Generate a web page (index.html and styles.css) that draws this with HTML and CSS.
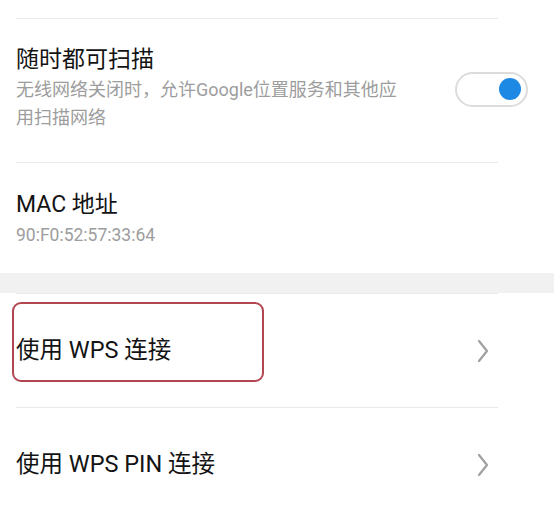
FILE: index.html
```html
<!DOCTYPE html>
<html lang="zh-CN">
<head>
<meta charset="utf-8">
<title>WLAN 高级设置</title>
<link rel="stylesheet" href="styles.css">
</head>
<body>
<div class="screen">
  <div class="top-space"></div>
  <div class="divider"></div>

  <div class="row row-toggle">
    <div class="text">
      <div class="title">随时都可扫描</div>
      <div class="sub">无线网络关闭时，允许Google位置服务和其他应用扫描网络</div>
    </div>
    <div class="switch" role="switch" aria-checked="true"><span class="knob"></span></div>
  </div>
  <div class="divider"></div>

  <div class="row row-info">
    <div class="text">
      <div class="title">MAC 地址</div>
      <div class="sub value">90:F0:52:57:33:64</div>
    </div>
  </div>

  <div class="band"></div>
  <div class="divider"></div>

  <div class="row row-link highlighted">
    <div class="title">使用 WPS 连接</div>
    <svg class="chev" width="12" height="24" viewBox="0 0 12 24"><path d="M2 2 L10 12 L2 22" fill="none" stroke="#a0a0a0" stroke-width="2.2" stroke-linecap="round" stroke-linejoin="round"/></svg>
    <span class="mark"></span>
  </div>
  <div class="divider"></div>

  <div class="row row-link">
    <div class="title">使用 WPS PIN 连接</div>
    <svg class="chev" width="12" height="24" viewBox="0 0 12 24"><path d="M2 2 L10 12 L2 22" fill="none" stroke="#a0a0a0" stroke-width="2.2" stroke-linecap="round" stroke-linejoin="round"/></svg>
  </div>
</div>
</body>
</html>
```

FILE: styles.css
```css
html, body {
  margin: 0;
  padding: 0;
  background: #ffffff;
}

body {
  font-family: Roboto, "Noto Sans CJK SC", "Noto Sans", sans-serif;
  color: #141414;
  width: 554px;
  height: 519px;
  overflow: hidden;
}

.screen {
  display: flex;
  flex-direction: column;
}

.top-space {
  height: 18px;
}

.divider {
  height: 1px;
  margin: 0 56px 0 16px;
  background: #e9e9e9;
}

.row {
  display: flex;
  align-items: center;
  padding-left: 16px;
}

.title {
  font-size: 23px;
  line-height: 32px;
  color: #131313;
  white-space: nowrap;
}

.sub {
  font-size: 18px;
  line-height: 28px;
  color: #9d9d9d;
}

.row-toggle {
  padding: 25px 26px 30px 16px;
  justify-content: space-between;
}

.row-toggle .text {
  width: 396px;
}

.switch {
  width: 64px;
  height: 31px;
  border: 2px solid #dcdcdc;
  border-radius: 18px;
  display: flex;
  align-items: center;
  justify-content: flex-end;
  padding-right: 5px;
  box-sizing: content-box;
  flex: none;
  margin-top: 2px;
}

.knob {
  width: 22px;
  height: 22px;
  border-radius: 50%;
  background: #1e88e5;
}

.row-info {
  padding: 26px 16px 24px 16px;
}

.value {
  font-size: 17.5px;
}

.band {
  height: 20px;
  background: #f1f1f1;
}

.row-link {
  height: 113px;
  justify-content: space-between;
  padding-right: 65px;
  position: relative;
}

.row-link .title {
  font-size: 23.5px;
  margin-top: -2px;
}

.chev {
  flex: none;
}

.mark {
  position: absolute;
  left: 12px;
  top: 8px;
  width: 248px;
  height: 76px;
  border: 2px solid #b24752;
  border-radius: 9px;
}
```
